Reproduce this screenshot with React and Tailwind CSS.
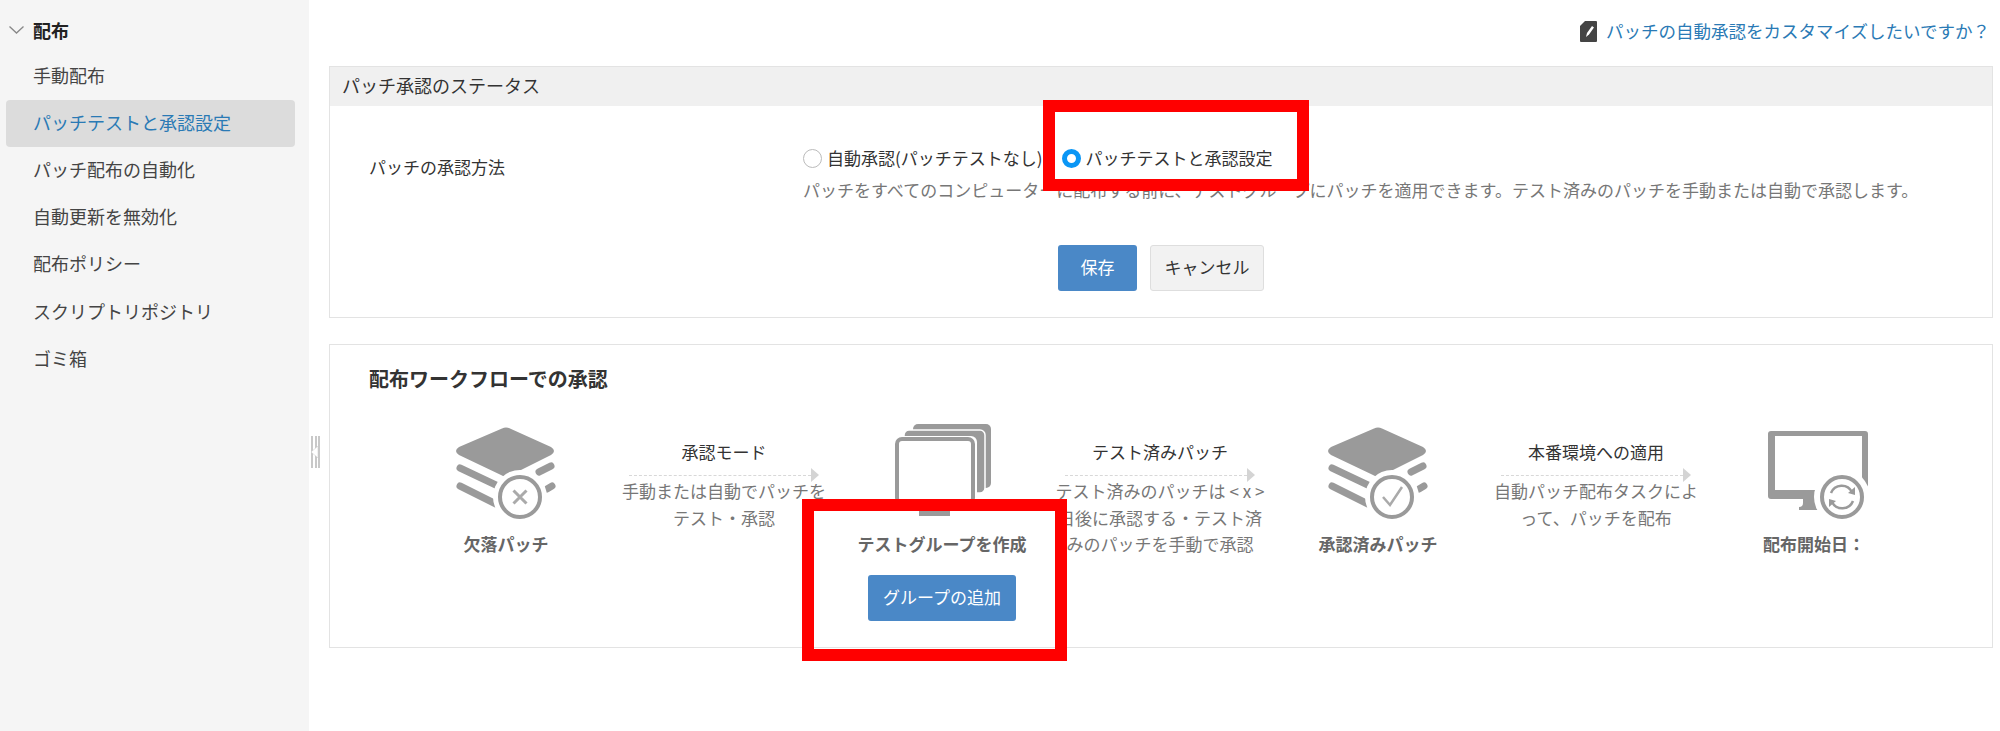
import React from 'react';

const font = "font-['Noto_Sans_CJK_JP','Liberation_Sans',sans-serif]";

const sideItems = [
  '手動配布',
  'パッチテストと承認設定',
  'パッチ配布の自動化',
  '自動更新を無効化',
  '配布ポリシー',
  'スクリプトリポジトリ',
  'ゴミ箱',
];

function StackIcon({ children }) {
  return (
    <svg width="110" height="100" viewBox="0 0 110 100" className="overflow-visible">
      <path d="M51 4.5Q55 2.5 59 4.5L100 23Q106 27 100 31L60 51Q55 54 50 51L8 31Q2 27 8 23Z" fill="#9a9a9a" />
      <path d="M9 44L47 62M9 62L45 80" stroke="#9a9a9a" strokeWidth="7" strokeLinecap="round" />
      <path d="M88 48L100 42M96 65L101 62" stroke="#9a9a9a" strokeWidth="7" strokeLinecap="round" />
      <circle cx="69" cy="73" r="27" fill="#fff" />
      <circle cx="69" cy="73" r="20" fill="#fff" stroke="#9a9a9a" strokeWidth="4" />
      {children}
    </svg>
  );
}

function GroupIcon() {
  return (
    <svg width="110" height="100" viewBox="0 0 110 100" className="overflow-visible">
      <rect x="26" y="0" width="78" height="64" rx="5" fill="#9a9a9a" />
      <rect x="17" y="6" width="81" height="63" rx="5" fill="#9a9a9a" stroke="#fff" strokeWidth="1.5" />
      <rect x="7" y="12" width="83" height="70" rx="6" fill="#fff" />
      <rect x="10" y="15" width="76" height="64" rx="5" fill="#fff" stroke="#9a9a9a" strokeWidth="4" />
      <rect x="32" y="80" width="31" height="12" fill="#9a9a9a" />
    </svg>
  );
}

function MonitorIcon() {
  return (
    <svg width="110" height="100" viewBox="0 0 110 100" className="overflow-visible">
      <path
        fillRule="evenodd"
        d="M12 7H106Q109 7 109 10V72Q109 75 106 75H12Q9 75 9 72V10Q9 7 12 7ZM16 12V66H103V12Z"
        fill="#9a9a9a"
      />
      <path d="M44 75H60V86H40V83Q44 83 44 79Z" fill="#9a9a9a" />
      <circle cx="83" cy="73" r="28" fill="#fff" />
      <circle cx="83" cy="73" r="20" fill="#fff" stroke="#9a9a9a" strokeWidth="4" />
      <path d="M72 69A11.5 11.5 0 0 1 93 68" fill="none" stroke="#9a9a9a" strokeWidth="2.5" />
      <path d="M94 77A11.5 11.5 0 0 1 73 78" fill="none" stroke="#9a9a9a" strokeWidth="2.5" />
      <path d="M89 69L96 71L96 63Z M77 77L70 75L70 83Z" fill="#9a9a9a" />
    </svg>
  );
}

function FlowNode({ icon, label, children }) {
  return (
    <div className="w-[218px] flex flex-col items-center">
      {icon}
      <div className="mt-[7px] text-[17px] leading-[26px] font-bold text-[#666]">{label}</div>
      {children}
    </div>
  );
}

function FlowArrow({ title, lines }) {
  return (
    <div className="w-[218px] flex flex-col items-center pt-[15px]">
      <div className="text-[17px] leading-[26px] text-[#333]">{title}</div>
      <div className="w-[190px] h-[14px] mt-[3px] flex items-center">
        <div className="flex-1 border-t border-dashed border-[#d8d8d8]" />
        <svg width="8" height="14" viewBox="0 0 8 14">
          <path d="M0 0L8 7L0 14Z" fill="#d4d4d4" />
        </svg>
      </div>
      <div className="-mt-[4px] text-[17px] leading-[26.5px] text-[#777] text-center whitespace-nowrap">
        {lines.map((l) => (
          <div key={l}>{l}</div>
        ))}
      </div>
    </div>
  );
}

function Radio({ checked, label }) {
  return (
    <label className="flex items-center gap-[5px] text-[17px] leading-[26px] text-[#333]">
      {checked ? (
        <span className="w-[19px] h-[19px] rounded-full border-[5px] border-[#0a96f5] bg-white" />
      ) : (
        <span className="w-[19px] h-[19px] rounded-full border border-[#bbb] bg-white" />
      )}
      {label}
    </label>
  );
}

export default function App() {
  return (
    <div className={`relative flex w-[2000px] h-[731px] bg-white overflow-hidden ${font}`}>
      <aside className="w-[309px] shrink-0 bg-[#f5f5f5] pt-2">
        <div className="h-[45px] flex items-center pl-[9px] gap-[9px] pb-[1px]">
          <svg width="15" height="8" viewBox="0 0 15 8">
            <path d="M0.5 0.5L7.5 7L14.5 0.5" fill="none" stroke="#888" strokeWidth="1.3" />
          </svg>
          <span className="text-[18px] font-bold text-[#222]">配布</span>
        </div>
        <nav className="pl-[6px] pr-[14px]">
          {sideItems.map((item, i) => (
            <div
              key={item}
              className={
                i === 1
                  ? 'h-[47.2px] flex items-center pl-[27px] pb-[3px] rounded-[4px] bg-[#dcdcdc] text-[18px] text-[#2a7ab5]'
                  : 'h-[47.2px] flex items-center pl-[27px] pb-[3px] text-[18px] text-[#444]'
              }
            >
              {item}
            </div>
          ))}
        </nav>
      </aside>

      <main className="flex-1 pl-5 pr-[7px]">
        <div className="h-[62px] mb-1 flex items-center justify-end gap-[9px] pr-[3px]">
          <svg width="17" height="21" viewBox="0 0 17 21">
            <path d="M5 0H16Q17 0 17 1V20Q17 21 16 21H1Q0 21 0 20V5Z" fill="#444" />
            <path d="M6 16L7 12L12 5L14 6.5L9 13.5Z" fill="#fff" />
          </svg>
          <a className="text-[17.5px] text-[#2a7ab5]">パッチの自動承認をカスタマイズしたいですか？</a>
        </div>

        <section className="h-[252px] border border-[#e3e3e3]">
          <div className="h-[39px] bg-[#f0f0f0] pl-3 pb-[3px] flex items-center text-[18px] text-[#333]">
            パッチ承認のステータス
          </div>
          <div className="flex pl-[39px]">
            <div className="w-[434px] pt-[48px] text-[17px] leading-[26px] text-[#333]">パッチの承認方法</div>
            <div className="pt-[39px]">
              <div className="flex items-center gap-[19px]">
                <Radio label="自動承認(パッチテストなし)" />
                <Radio checked label="パッチテストと承認設定" />
              </div>
              <div className="mt-[6px] text-[17px] leading-[26px] text-[#777] whitespace-nowrap">
                パッチをすべてのコンピューターに配布する前に、テストグループにパッチを適用できます。テスト済みのパッチを手動または自動で承認します。
              </div>
            </div>
          </div>
          <div className="mt-[42px] flex justify-center gap-[13px]">
            <button className="w-[79px] h-[46px] pb-[3px] rounded-[3px] bg-[#4a88c7] text-[17px] text-white">保存</button>
            <button className="w-[114px] h-[46px] pb-[3px] rounded-[3px] bg-[#f2f2f2] border border-[#dedede] text-[17px] text-[#333]">
              キャンセル
            </button>
          </div>
        </section>

        <section className="mt-[26px] h-[304px] border border-[#e3e3e3]">
          <h2 className="pl-[39px] pt-[19px] h-[79px] text-[20px] leading-[30px] font-bold text-[#333]">
            配布ワークフローでの承認
          </h2>
          <div className="flex justify-center pr-[2px]">
            <FlowNode
              label="欠落パッチ"
              icon={
                <StackIcon>
                  <path d="M62.5 66.5L75.5 79.5M75.5 66.5L62.5 79.5" stroke="#aaa" strokeWidth="3" />
                </StackIcon>
              }
            />
            <FlowArrow title="承認モード" lines={['手動または自動でパッチを', 'テスト・承認']} />
            <FlowNode label="テストグループを作成" icon={<GroupIcon />}>
              <button className="mt-[18px] w-[148px] h-[46px] pb-[3px] rounded-[3px] bg-[#4a88c7] text-[17px] text-white">
                グループの追加
              </button>
            </FlowNode>
            <FlowArrow
              title="テスト済みパッチ"
              lines={['テスト済みのパッチは < x >', '日後に承認する・テスト済', 'みのパッチを手動で承認']}
            />
            <FlowNode
              label="承認済みパッチ"
              icon={
                <StackIcon>
                  <path d="M60 73L67 81L79 63" fill="none" stroke="#aaa" strokeWidth="2.5" />
                </StackIcon>
              }
            />
            <FlowArrow title="本番環境への適用" lines={['自動パッチ配布タスクによ', 'って、パッチを配布']} />
            <FlowNode label="配布開始日：" icon={<MonitorIcon />} />
          </div>
        </section>
      </main>

      {/* sidebar collapse handle */}
      <div className="absolute left-[311px] top-[436px] w-[9px] h-[32px] flex justify-between">
        <span className="w-[2px] bg-[#c8c8c8]" />
        <span className="w-[2px] bg-[#c8c8c8]" />
        <span className="w-[2px] bg-[#c8c8c8]" />
        <svg className="absolute left-0 top-[10px]" width="8" height="12" viewBox="0 0 8 12">
          <path d="M0 6L7 0V12Z" fill="#fff" stroke="#c8c8c8" strokeWidth="0.5" />
        </svg>
      </div>

      {/* red annotation boxes */}
      <div className="absolute left-[1043px] top-[100px] w-[266px] h-[91px] border-[12px] border-[#ff0000]" />
      <div className="absolute left-[802px] top-[499px] w-[265px] h-[162px] border-[12px] border-[#ff0000]" />
    </div>
  );
}
